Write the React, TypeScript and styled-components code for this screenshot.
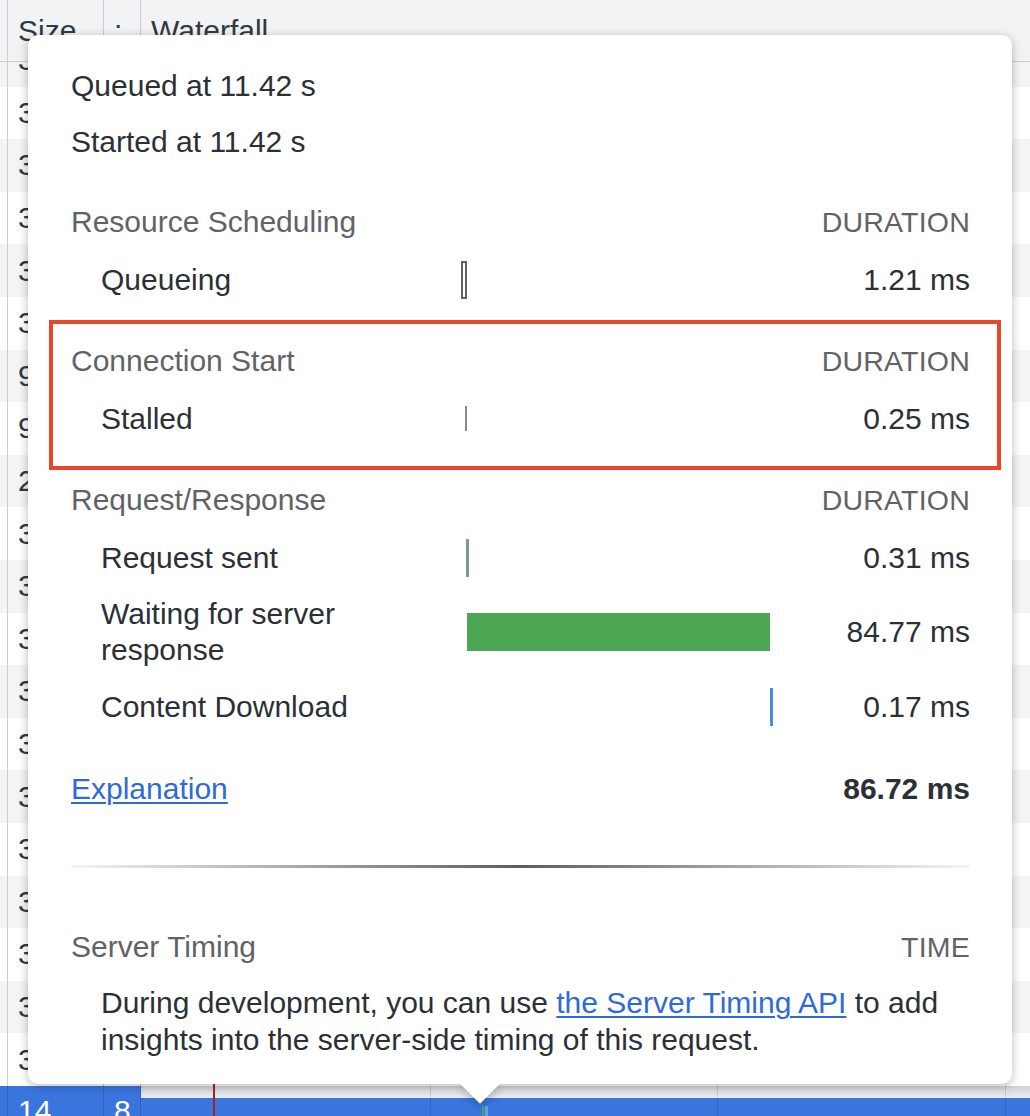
import React from "react";
import styled, { createGlobalStyle } from "styled-components";

const GlobalStyle = createGlobalStyle`
  html, body { margin: 0; padding: 0; background: #ffffff; }
  body { font-family: "Liberation Sans", Arial, Helvetica, sans-serif; }
  * { box-sizing: border-box; }
`;

const FONT = `"Liberation Sans", Arial, Helvetica, sans-serif`;

const Page = styled.div`
  position: relative;
  width: 1030px;
  height: 1116px;
  overflow: hidden;
  background: #ffffff;
  font-family: ${FONT};
  font-size: 30px;
  color: #303942;
`;

/* ---------- background network table ---------- */

const COLS = "7px 96px 37px 1fr";

const Table = styled.div`
  display: flex;
  flex-direction: column;
  height: 100%;
`;

const HeaderRow = styled.div`
  display: grid;
  grid-template-columns: ${COLS};
  height: 62px;
  flex: none;
  background: #f1f3f4;
  border-bottom: 1px solid #cbcdd1;
  position: relative;
  z-index: 1;
`;

const HeadCell = styled.div<{ $first?: boolean }>`
  display: flex;
  align-items: center;
  padding-left: ${(p) => (p.$first ? "0" : "10px")};
  border-left: ${(p) => (p.$first ? "none" : "1px solid #cacdd1")};
  white-space: nowrap;
  overflow: hidden;
  color: #303942;
`;

const Body = styled.div`
  position: relative;
  flex: 1;
  overflow: hidden;
`;

const Scroller = styled.div`
  margin-top: -28px;
  display: flex;
  flex-direction: column;
`;

const Row = styled.div<{ $odd: boolean; $selected?: boolean }>`
  display: grid;
  grid-template-columns: ${COLS};
  height: ${(p) => (p.$selected ? "80px" : "52.6px")};
  background: ${(p) =>
    p.$selected ? "#3a74dd" : p.$odd ? "#ffffff" : "#f4f4f5"};
  color: ${(p) => (p.$selected ? "#ffffff" : "#303942")};
`;

const Cell = styled.div<{ $first?: boolean; $selected?: boolean }>`
  display: flex;
  align-items: ${(p) => (p.$selected ? "flex-start" : "center")};
  padding-top: ${(p) => (p.$selected ? "8px" : "0")};
  padding-left: ${(p) => (p.$first ? "0" : "10px")};
  border-left: ${(p) =>
    p.$first
      ? "none"
      : p.$selected
      ? "1px solid #2f62c0"
      : "1px solid #cacdd1"};
  white-space: nowrap;
  overflow: hidden;
  line-height: 34px;
`;

const WaterfallCell = styled.div<{ $selected?: boolean }>`
  position: relative;
  border-left: 1px solid ${(p) => (p.$selected ? "#2f62c0" : "#cacdd1")};
  overflow: hidden;
`;

const SelectedStrip = styled.div`
  height: 12px;
  background: linear-gradient(#cfd3d9, #eceef1);
`;

const MiniBar = styled.div<{ $color: string }>`
  position: absolute;
  top: 20px;
  bottom: 0;
  background: ${(p) => p.$color};
`;

const GridLine = styled.div<{ $red?: boolean }>`
  position: absolute;
  top: 0;
  bottom: 0;
  width: ${(p) => (p.$red ? "2px" : "1px")};
  background: ${(p) => (p.$red ? "#a8231b" : "rgba(0,0,0,0.12)")};
  pointer-events: none;
`;

/* ---------- timing popover ---------- */

const Popover = styled.div`
  position: absolute;
  left: 28px;
  top: 35px;
  width: 984px;
  height: 1049px;
  filter: drop-shadow(0 2px 5px rgba(0, 0, 0, 0.28));
  z-index: 2;
`;

const Card = styled.div`
  position: relative;
  height: 100%;
  background: #ffffff;
  border-radius: 10px;
  padding: 23px 42px 0 43px;
  display: flex;
  flex-direction: column;
  color: #2b3036;
`;

const Arrow = styled.div`
  position: absolute;
  left: 438px;
  bottom: -14px;
  width: 28px;
  height: 28px;
  background: #ffffff;
  transform: rotate(45deg);
`;

const Highlight = styled.div`
  position: absolute;
  left: 21px;
  top: 285px;
  width: 952px;
  height: 150px;
  border: 4px solid #e9472b;
  pointer-events: none;
`;

const InfoLine = styled.div`
  height: 56px;
  line-height: 56px;
`;

const Section = styled.div<{ $gap: number }>`
  margin-top: ${(p) => p.$gap}px;
  display: flex;
  flex-direction: column;
`;

const SectionHead = styled.div`
  display: flex;
  justify-content: space-between;
  align-items: center;
  height: 58px;
  color: #5f6368;
`;

const Caps = styled.span`
  font-size: 28.5px;
  letter-spacing: 0.2px;
`;

const TimingRow = styled.div<{ $tall?: boolean }>`
  display: grid;
  grid-template-columns: 390px 311px 1fr;
  align-items: center;
  height: ${(p) => (p.$tall ? "92px" : "57px")};
`;

const Label = styled.div`
  padding-left: 30px;
  line-height: 36px;
`;

const Track = styled.div`
  display: flex;
  align-items: center;
  height: 38px;
`;

const Bar = styled.div<{ $color: string; $outline?: boolean; $short?: boolean }>`
  flex: none;
  height: ${(p) => (p.$short ? "25px" : "38px")};
  background: ${(p) => (p.$outline ? "#ffffff" : p.$color)};
  border: ${(p) => (p.$outline ? `2px solid ${p.$color}` : "none")};
`;

const Value = styled.div`
  text-align: right;
`;

const TotalRow = styled.div`
  margin-top: 25px;
  height: 58px;
  display: flex;
  justify-content: space-between;
  align-items: center;
`;

const Link = styled.a`
  color: #2f6bd8;
  text-decoration: underline;
  text-underline-offset: 3px;
  text-decoration-thickness: 2px;
  cursor: pointer;
`;

const Total = styled.span`
  font-weight: bold;
`;

const Divider = styled.div`
  margin-top: 47px;
  height: 3px;
  background: linear-gradient(
    to right,
    rgba(0, 0, 0, 0.04),
    #5e5e60 50%,
    rgba(0, 0, 0, 0.04)
  );
`;

const Note = styled.p`
  margin: 8px 0 0;
  padding-left: 30px;
  line-height: 37px;
`;

type Timing = {
  label: string;
  value: string;
  left: number;
  width: number;
  color: string;
  outline?: boolean;
  short?: boolean;
  tall?: boolean;
};

const sections: { title: string; gap: number; rows: Timing[] }[] = [
  {
    title: "Resource Scheduling",
    gap: 23,
    rows: [
      { label: "Queueing", value: "1.21 ms", left: 0, width: 6, color: "#5f6368", outline: true },
    ],
  },
  {
    title: "Connection Start",
    gap: 24,
    rows: [
      { label: "Stalled", value: "0.25 ms", left: 4, width: 2, color: "#8a8a8a", short: true },
    ],
  },
  {
    title: "Request/Response",
    gap: 24,
    rows: [
      { label: "Request sent", value: "0.31 ms", left: 5, width: 2.5, color: "#7b9a9d" },
      { label: "Waiting for server response", value: "84.77 ms", left: 6, width: 303, color: "#4ca754", tall: true },
      { label: "Content Download", value: "0.17 ms", left: 309, width: 2.5, color: "#4291e1" },
    ],
  },
];

const sizes = [
  "312", "309", "314", "311", "306", "318", "944",
  "921", "287", "312", "315", "309", "313", "310",
  "308", "316", "312", "311", "314", "309",
];

export default function App() {
  return (
    <>
      <GlobalStyle />
      <Page>
        <Table>
          <HeaderRow>
            <HeadCell $first />
            <HeadCell>Size</HeadCell>
            <HeadCell>:</HeadCell>
            <HeadCell>Waterfall</HeadCell>
          </HeaderRow>
          <Body>
            <Scroller>
              {sizes.map((s, i) => (
                <Row key={i} $odd={i % 2 === 1}>
                  <Cell $first />
                  <Cell>{s}</Cell>
                  <Cell />
                  <WaterfallCell />
                </Row>
              ))}
              <Row $odd={false} $selected>
                <Cell $first $selected />
                <Cell $selected>14</Cell>
                <Cell $selected>8</Cell>
                <WaterfallCell $selected>
                  <SelectedStrip />
                  <MiniBar $color="#4ca754" style={{ left: 341, width: 2 }} />
                  <MiniBar $color="#5ba3f2" style={{ left: 344, width: 3 }} />
                </WaterfallCell>
              </Row>
            </Scroller>
            <GridLine $red style={{ left: 213 }} />
            <GridLine style={{ left: 430 }} />
            <GridLine style={{ left: 717 }} />
            <GridLine style={{ left: 1005 }} />
          </Body>
        </Table>

        <Popover>
          <Arrow />
          <Card>
            <InfoLine>Queued at 11.42 s</InfoLine>
            <InfoLine>Started at 11.42 s</InfoLine>
            {sections.map((sec) => (
              <Section key={sec.title} $gap={sec.gap}>
                <SectionHead>
                  <span>{sec.title}</span>
                  <Caps>DURATION</Caps>
                </SectionHead>
                {sec.rows.map((r) => (
                  <TimingRow key={r.label} $tall={r.tall}>
                    <Label>
                      {r.tall ? (
                        <>
                          Waiting for server
                          <br />
                          response
                        </>
                      ) : (
                        r.label
                      )}
                    </Label>
                    <Track>
                      <Bar
                        $color={r.color}
                        $outline={r.outline}
                        $short={r.short}
                        style={{ marginLeft: r.left, width: r.width }}
                      />
                    </Track>
                    <Value>{r.value}</Value>
                  </TimingRow>
                ))}
              </Section>
            ))}
            <TotalRow>
              <Link>Explanation</Link>
              <Total>86.72 ms</Total>
            </TotalRow>
            <Divider />
            <Section $gap={50}>
              <SectionHead>
                <span>Server Timing</span>
                <Caps>TIME</Caps>
              </SectionHead>
            </Section>
            <Note>
              During development, you can use <Link>the Server Timing API</Link> to add
              insights into the server-side timing of this request.
            </Note>
            <Highlight />
          </Card>
        </Popover>
      </Page>
    </>
  );
}
